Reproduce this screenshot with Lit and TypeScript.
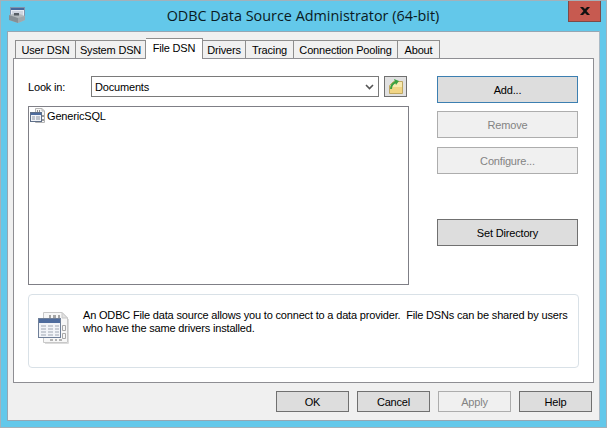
import { LitElement, html, css, svg } from "lit";
import { customElement } from "lit/decorators.js";

const docIcon = svg`
  <path d="M5.5 .5H24L29.5 6V30.5H5.500Z" fill="#f7f7f7" stroke="#c8c8c8"/>
  <path d="M24 .5V6H29.5Z" fill="#e2e2e2" stroke="#c8c8c8"/>
  <path d="M30.5 7V31.5H7" fill="none" stroke="#dcdcdc"/>
  <path d="M11 3h2v3h-2zM15 3h3v3h-3zM20 3h2v3h-2z" fill="#a6a6a6"/>
  <path d="M24.500 13.500h3v5h-3zM24.500 21.500h3v5h-3z" fill="none" stroke="#a8a8a8"/>
  <path d="M12 27h3v2h-3zM17 27h2v2h-2zM21 27h3v2h-3z" fill="#b4b4b4"/>
  <rect x=".5" y="6.5" width="22" height="19" fill="#f2f4f8" stroke="#6f7f98"/>
  <rect x="1" y="7" width="21" height="4" fill="#4e6c9e"/>
  <path d="M3 14h5M10 14h5M17 14h4M3 17h5M10 17h5M17 17h4M3 20h5M10 20h5M17 20h4M3 23h5M10 23h5M17 23h4" stroke="#9ea6b2"/>
`;

const smallIcon = svg`
  <path d="M5.5 .5H12L14.500 3V14.500H5.500Z" fill="#f7f7f7" stroke="#b4b4b4"/>
  <path d="M12 .5V3H14.500" fill="none" stroke="#b4b4b4"/>
  <path d="M7 2h1v2H7zM9 2h1v2H9z" fill="#8f8f8f"/>
  <path d="M12 7h2v2h-2zM12 11h2v2h-2z" fill="#9a9a9a"/>
  <rect x=".5" y="4.500" width="11" height="9" fill="#f2f4f8" stroke="#5f6f88"/>
  <rect x="1" y="5" width="10" height="2" fill="#4e6c9e"/>
  <path d="M2 9h3M6 9h4M2 11h3M6 11h4" stroke="#8d95a2"/>
`;

@customElement("app-root")
export class AppRoot extends LitElement {
  static styles = css`
    :host {
      display: flex;
      flex-direction: column;
      box-sizing: border-box;
      width: 607px;
      height: 428px;
      background: #63c8ea;
      border: 1px solid #a3b1ba;
      font: 11px "Liberation Sans", Arial, sans-serif;
      letter-spacing: -0.175px;
      color: #000;
    }
    .titlebar {
      height: 30px;
      flex: none;
      display: flex;
      align-items: flex-start;
      padding: 0 5px 0 8px;
    }
    .appicon { margin-top: 6px; flex: none; }
    .title {
      flex: 1;
      text-align: center;
      font: 14.400px/30px "Open Sans", sans-serif;
      letter-spacing: 0;
      color: #0a1a22;
      padding-left: 12px;
    }
    .close {
      width: 33px;
      height: 21px;
      box-sizing: border-box;
      background: #c75a50;
      border: 1px solid #7d4a48;
      border-top: none;
      display: flex;
      align-items: center;
      justify-content: center;
      flex: none;
    }
    .client {
      flex: 1;
      margin: 0 6px 6px;
      background: #f0f0f0;
      border: 1px solid #95a6b3;
      border-right-color: #a9bac6;
      padding: 8px 5px 7px 5px;
      display: flex;
      flex-direction: column;
      box-sizing: border-box;
    }
    .tabs {
      display: flex;
      height: 18px;
      padding-left: 2px;
      position: relative;
      z-index: 1;
      align-items: flex-end;
    }
    .tab {
      box-sizing: border-box;
      height: 18px;
      border: 1px solid #8e8e8e;
      border-bottom: none;
      border-left-width: 0;
      background: #f0f0f0;
      display: flex;
      align-items: center;
      justify-content: center;
      padding-top: 1px;
      white-space: nowrap;
    }
    .tab.first { border-left-width: 1px; }
    .tab.active {
      height: 21px;
      margin-bottom: -1px;
      background: #fff;
      padding-top: 0;
      padding-bottom: 3px;
    }
    .panel {
      box-sizing: border-box;
      height: 325px;
      background: #fff;
      border: 1px solid #8e8e93;
      padding: 17px 14px 14px 14px;
      display: flex;
      flex-direction: column;
    }
    .main {
      display: flex;
      justify-content: space-between;
    }
    .left { width: 381px; }
    .lookin { display: flex; align-items: center; height: 21px; }
    .lookin label { width: 63px; flex: none; }
    .combo {
      box-sizing: border-box;
      width: 288px;
      height: 21px;
      border: 1px solid #7a7a7a;
      background: #fff;
      display: flex;
      align-items: center;
      justify-content: space-between;
      padding: 0 4px 0 3px;
    }
    .folder {
      box-sizing: border-box;
      margin-left: 5px;
      width: 23px;
      height: 21px;
      border: 1px solid #707070;
      background: #e1e1e1;
      display: flex;
      align-items: center;
      justify-content: center;
    }
    .list {
      box-sizing: border-box;
      margin-top: 9px;
      width: 381px;
      height: 179px;
      border: 1px solid #7f7f86;
      padding: 1px;
      display: flex;
      align-items: flex-start;
    }
    .item { display: flex; align-items: center; gap: 1px; height: 16px; }
    .right {
      width: 141px;
      margin-right: 1px;
      display: flex;
      flex-direction: column;
    }
    button {
      font: inherit;
      letter-spacing: inherit;
      color: #000;
      box-sizing: border-box;
      background: #dddddd;
      border: 1px solid #707070;
      border-radius: 0;
      padding: 0;
      margin: 0;
    }
    button[disabled] {
      color: #838383;
      background: #f0f0f0;
      border-color: #adadad;
    }
    .right button { height: 27px; width: 141px; margin-bottom: 9px; }
    .right button.default { border-color: #3c7fb1; margin-bottom: 8px; }
    .right button.setdir { margin-top: 36px; margin-bottom: 0; }
    .info {
      box-sizing: border-box;
      margin-top: 9px;
      width: 551px;
      height: 74px;
      border: 1px solid #d9e1e7;
      border-radius: 4px;
      padding: 17px 0 0 9px;
      display: flex;
    }
    .info svg { flex: none; margin-right: 13px; }
    .info p {
      margin: -3px 0 0;
      line-height: 13px;
      white-space: pre-wrap;
      width: 490px;
    }
    .footer {
      display: flex;
      justify-content: flex-end;
      gap: 8px;
      margin-top: 8px;
      padding-right: 2px;
    }
    .footer button { width: 73px; height: 21px; }
  `;

  render() {
    return html`
      <div class="titlebar">
        <svg class="appicon" width="17" height="17" viewBox="0 0 17 17">
          <rect x="1.5" y=".5" width="14" height="9" fill="#e8edf4" stroke="#7f93ad"/>
          <rect x="2" y="1" width="13" height="2" fill="#47689c"/>
          <path d="M3 5h11M3 7h11" stroke="#b4bcc8"/>
          <path d="M0 8l8-2 8 3v4l-7 3-9-3z" fill="#b3babd"/>
          <path d="M0 8l9 3v5l-9-3z" fill="#868f94"/>
          <path d="M5 6h5v2.500H5z" fill="#565e64"/>
          <path d="M9 11l7-2v4l-7 3z" fill="#a0a8ac"/>
        </svg>
        <div class="title">ODBC Data Source Administrator (64-bit)</div>
        <div class="close">
          <svg width="10" height="8" viewBox="0 0 10 8">
            <path d="M0 0h3l2 2 2-2h3L6.500 4 10 8H7L5 6 3 8H0l3.500-4z" fill="#111"/>
          </svg>
        </div>
      </div>
      <div class="client">
        <div class="tabs">
          <div class="tab first" style="width:61px">User DSN</div>
          <div class="tab" style="width:70px">System DSN</div>
          <div class="tab active" style="width:57px">File DSN</div>
          <div class="tab" style="width:43px">Drivers</div>
          <div class="tab" style="width:48px">Tracing</div>
          <div class="tab" style="width:104px">Connection Pooling</div>
          <div class="tab" style="width:42px">About</div>
        </div>
        <div class="panel">
          <div class="main">
            <div class="left">
              <div class="lookin">
                <label>Look in:</label>
                <div class="combo">
                  <span>Documents</span>
                  <svg width="9" height="6" viewBox="0 0 9 6">
                    <path d="M1 1l3.500 3.500L8 1" fill="none" stroke="#555" stroke-width="1.600"/>
                  </svg>
                </div>
                <div class="folder">
                  <svg width="17" height="17" viewBox="0 0 17 17">
                    <path d="M6.500 3.500h9v12h-13V7.500z" fill="#f8eab0" stroke="#bfa862"/>
                    <path d="M3 9h12v6H3z" fill="#f1d585"/>
                    <path d="M4 11c0-3 2-6 5-7" fill="none" stroke="#3aa142" stroke-width="2"/>
                    <path d="M7 1l5 2-3 4z" fill="#3aa142"/>
                  </svg>
                </div>
              </div>
              <div class="list">
                <div class="item">
                  <svg width="16" height="16" viewBox="0 0 16 16">${smallIcon}</svg>
                  <span>GenericSQL</span>
                </div>
              </div>
            </div>
            <div class="right">
              <button class="default">Add...</button>
              <button disabled>Remove</button>
              <button disabled>Configure...</button>
              <button class="setdir">Set Directory</button>
            </div>
          </div>
          <div class="info">
            <svg width="32" height="32" viewBox="0 0 32 32">${docIcon}</svg>
            <p>An ODBC File data source allows you to connect to a data provider.  File DSNs can be shared by users who have the same drivers installed.</p>
          </div>
        </div>
        <div class="footer">
          <button>OK</button>
          <button>Cancel</button>
          <button disabled>Apply</button>
          <button>Help</button>
        </div>
      </div>
    `;
  }
}
